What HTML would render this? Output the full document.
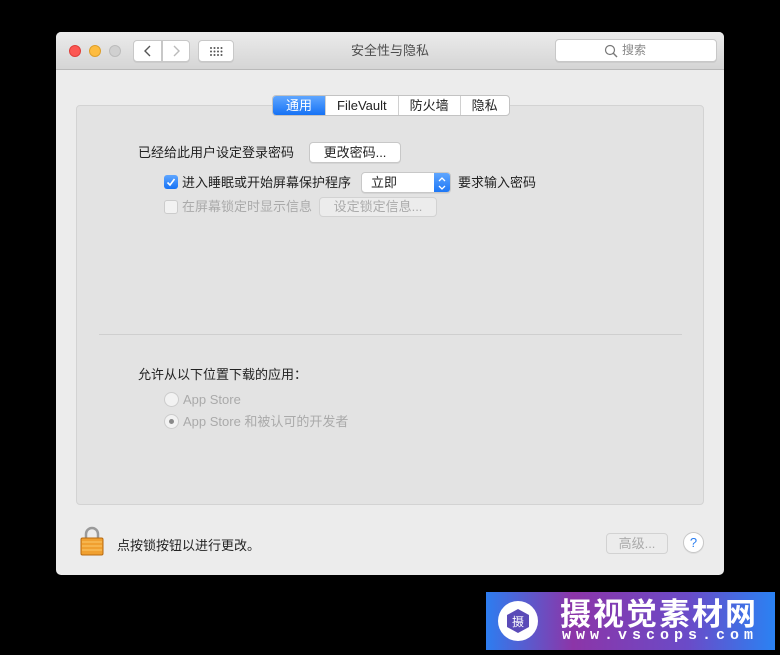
<!DOCTYPE html>
<html><head><meta charset="utf-8"><style>
*{margin:0;padding:0;box-sizing:border-box}
body{width:780px;height:655px;background:#000;position:relative;overflow:hidden;font-family:"Liberation Sans","Noto Sans CJK SC",sans-serif;font-size:13px;line-height:16px;color:#222}
.a{position:absolute}
.win{left:56px;top:32px;width:668px;height:543px;background:#ececec;border-radius:5px;overflow:hidden}
.tb{left:0;top:0;width:668px;height:38px;background:linear-gradient(#ebebeb,#d5d5d5);border-bottom:1px solid #b9b9b9}
.dot{width:12px;height:12px;border-radius:50%;top:13px}
.btn{background:#fff;border:1px solid #c8c8c8;border-radius:4px;box-shadow:0 1px 0 rgba(0,0,0,.06)}
.panel{left:20px;top:73px;width:628px;height:400px;background:#e3e3e3;border:1px solid #d3d3d3;border-radius:4px}
.tabs{left:216px;top:63px;height:21px;display:flex;border:1px solid #c3c3c3;border-radius:4px;background:#fff;overflow:hidden;font-size:13px}
.tabs div{padding:0 11px;line-height:19px;border-left:1px solid #d0d0d0}
.tabs div:first-child{border-left:none;background:linear-gradient(#5fa6ff,#1672f5);color:#fff;padding:0 13px}
.cb{width:14px;height:14px;border-radius:3px}
.gray{color:#aaa}
</style></head><body>
<div class="a win">
 <div class="a tb">
  <div class="a dot" style="left:13px;background:#fc5753;border:1px solid #df3e3a"></div>
  <div class="a dot" style="left:33px;background:#fdbc40;border:1px solid #de9f2a"></div>
  <div class="a dot" style="left:53px;background:#d0d0d0;border:1px solid #bcbcbc"></div>
  <div class="a btn" style="left:77px;top:8px;width:29px;height:22px;border-radius:4px 0 0 4px"><svg width="27" height="20"><path d="M16 5l-5 5 5 5" fill="none" stroke="#555" stroke-width="1.4"/></svg></div>
  <div class="a btn" style="left:106px;top:8px;width:28px;height:22px;border-radius:0 4px 4px 0"><svg width="26" height="20"><path d="M11 5l5 5-5 5" fill="none" stroke="#bbb" stroke-width="1.4"/></svg></div>
  <div class="a btn" style="left:142px;top:8px;width:36px;height:22px"><svg width="36" height="22"><g fill="#555"><circle cx="12" cy="7" r="1"/><circle cx="15.5" cy="7" r="1"/><circle cx="19" cy="7" r="1"/><circle cx="22.5" cy="7" r="1"/><circle cx="12" cy="10.5" r="1"/><circle cx="15.5" cy="10.5" r="1"/><circle cx="19" cy="10.5" r="1"/><circle cx="22.5" cy="10.5" r="1"/><circle cx="12" cy="14" r="1"/><circle cx="15.5" cy="14" r="1"/><circle cx="19" cy="14" r="1"/><circle cx="22.5" cy="14" r="1"/></g></svg></div>
  <div class="a" style="left:0;width:668px;top:11px;text-align:center;color:#4d4d4d;font-size:13px">安全性与隐私</div>
  <div class="a btn" style="left:499px;top:7px;width:162px;height:23px;color:#888;font-size:12px;line-height:21px;padding-left:48px"><svg width="14" height="14" style="position:absolute;left:48px;top:4px"><circle cx="6" cy="6" r="4.5" fill="none" stroke="#777" stroke-width="1.2"/><path d="M9.3 9.3L13 13" stroke="#777" stroke-width="1.4"/></svg><span style="margin-left:18px">搜索</span></div>
 </div>
 <div class="a panel">
  <div class="a" style="left:22px;top:228px;width:583px;height:1px;background:#cfcfcf"></div>
 </div>
 <div class="a tabs"><div>通用</div><div>FileVault</div><div>防火墙</div><div>隐私</div></div>
 <div class="a" style="left:82px;top:113px">已经给此用户设定登录密码</div>
 <div class="a btn" style="left:253px;top:110px;width:92px;height:21px;text-align:center;line-height:19px">更改密码...</div>
 <div class="a cb" style="left:108px;top:143px;background:linear-gradient(#5fa6ff,#1672f5)"><svg width="14" height="14"><path d="M3.5 7.5l2.5 2.5 4.5-6" fill="none" stroke="#fff" stroke-width="1.6"/></svg></div>
 <div class="a" style="left:126px;top:143px">进入睡眠或开始屏幕保护程序</div>
 <div class="a btn" style="left:305px;top:140px;width:90px;height:21px;line-height:19px;padding-left:9px;overflow:hidden">立即<div class="a" style="right:0;top:0;width:16px;height:21px;background:linear-gradient(#5fa6ff,#1672f5)"><svg width="16" height="21"><path d="M5 8l3-3 3 3M5 13l3 3 3-3" fill="none" stroke="#fff" stroke-width="1.3"/></svg></div></div>
 <div class="a" style="left:402px;top:143px">要求输入密码</div>
 <div class="a cb" style="left:108px;top:168px;background:#f2f2f2;border:1px solid #ccc"></div>
 <div class="a gray" style="left:126px;top:167px">在屏幕锁定时显示信息</div>
 <div class="a" style="left:263px;top:165px;width:118px;height:20px;border:1px solid #d2d2d2;border-radius:4px;background:#ececec;color:#aaa;text-align:center;line-height:18px">设定锁定信息...</div>
 <div class="a" style="left:82px;top:335px">允许从以下位置下载的应用：</div>
 <div class="a" style="left:108px;top:360px;width:15px;height:15px;border-radius:50%;border:1px solid #ccc;background:#f2f2f2"></div>
 <div class="a gray" style="left:127px;top:360px">App Store</div>
 <div class="a" style="left:108px;top:382px;width:15px;height:15px;border-radius:50%;border:1px solid #ccc;background:#f2f2f2"><div class="a" style="left:4px;top:4px;width:5px;height:5px;border-radius:50%;background:#888"></div></div>
 <div class="a gray" style="left:127px;top:382px">App Store 和被认可的开发者</div>
 <svg class="a" style="left:24px;top:494px" width="24" height="30"><path d="M6 12V8a6 6 0 0 1 12 0v4" fill="none" stroke="#9a9a9a" stroke-width="2.5"/><rect x="1" y="12" width="22" height="17" rx="1.5" fill="#f0a030" stroke="#b86a10"/><g stroke="#fcc868" stroke-width="1"><path d="M2 16h20M2 20h20M2 24h20"/></g></svg>
 <div class="a" style="left:61px;top:506px">点按锁按钮以进行更改。</div>
 <div class="a" style="left:550px;top:501px;width:62px;height:21px;border:1px solid #d2d2d2;border-radius:4px;background:#ececec;color:#aaa;text-align:center;line-height:19px">高级...</div>
 <div class="a btn" style="left:627px;top:500px;width:21px;height:21px;border-radius:50%;text-align:center;line-height:19px;color:#2a7ef0;font-size:13px">?</div>
</div>
<div class="a" style="left:486px;top:592px;width:289px;height:58px;background:linear-gradient(90deg,#2d7df0,#8c35a8 30%,#6a4bc8 70%,#2a82f3)">
 <div class="a" style="left:12px;top:9px;width:40px;height:40px;border-radius:50%;background:#fff"></div>
 <svg class="a" style="left:18px;top:15px" width="28" height="28"><polygon points="14,2 25,8 25,20 14,26 3,20 3,8" fill="#5a4ab8"/><text x="14" y="19" font-size="12" fill="#fff" text-anchor="middle" font-family="Noto Sans CJK SC">摄</text></svg>
 <div class="a" style="left:74px;top:3px;color:#fff;font-size:31px;font-weight:bold;letter-spacing:2px;line-height:34px;font-family:'Noto Sans CJK SC',sans-serif">摄视觉素材网</div>
 <div class="a" style="left:76px;top:36px;color:#fff;font-size:15px;line-height:16px;font-weight:bold;letter-spacing:5px;font-family:'Liberation Mono',monospace">www.vscops.com</div>
</div>
</body></html>
